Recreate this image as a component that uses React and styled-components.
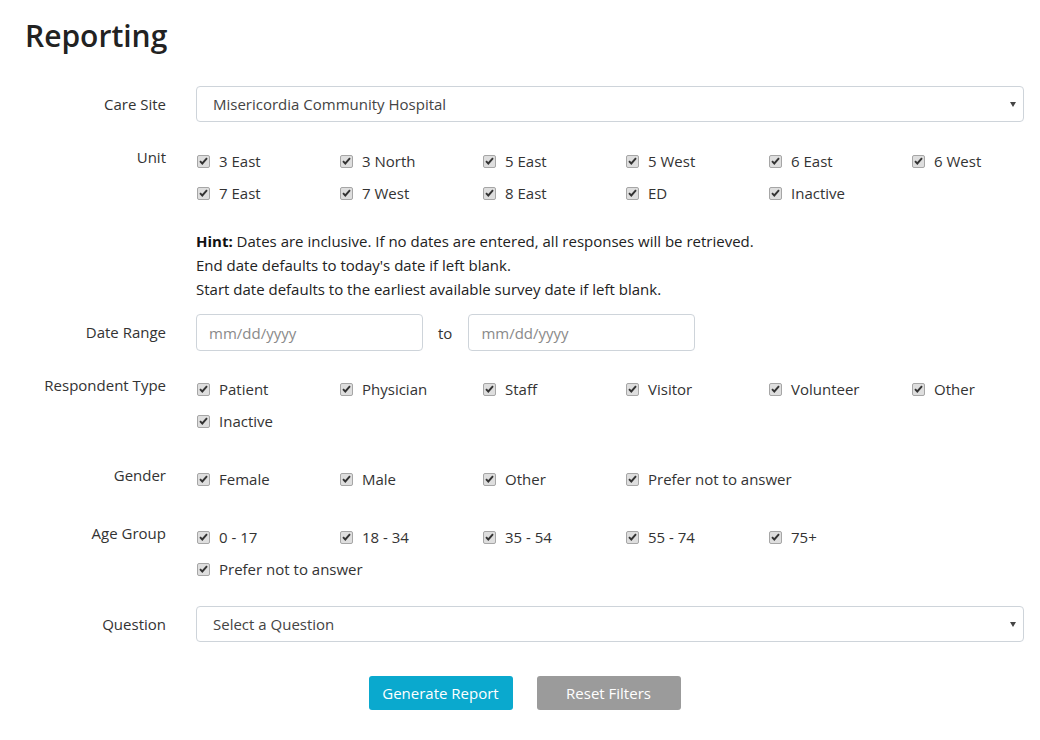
import React from 'react';
import styled, { createGlobalStyle } from 'styled-components';

const GlobalStyle = createGlobalStyle`
    body {
        margin: 0;
        background: #fff;
        font-family: "Open Sans", "Noto Sans", sans-serif;
        color: #333;
    }
`;

const Page = styled.div`
    width: 1040px;
    padding: 14px 16px 30px 25px;
    box-sizing: border-box;
    overflow: hidden;
`, Title = styled.h1`
    margin: 0;
    font-size: 30px;
    line-height: 44px;
    font-weight: 600;
    color: #222;
`, Row = styled.div`
    display: grid;
    grid-template-columns: 141px 1fr;
    column-gap: 30px;
    align-items: ${p => p.$top ? 'start' : 'center'};
    margin-top: ${p => p.$gap}px;
`, Label = styled.div`
    text-align: right;
    font-size: 15px;
    line-height: 24px;
    color: #333;
    margin-top: ${p => p.$top ? 0 : -1}px;
`, Select = styled.div`
    position: relative;
    height: 36px;
    box-sizing: border-box;
    border: 1px solid #ced4da;
    border-radius: 4px;
    padding: 0 16px;
    display: flex;
    align-items: center;
    font-size: 15px;
    color: #444;
    &:after {
        content: '';
        position: absolute;
        right: 7px;
        top: 15px;
        border-left: 3.5px solid transparent;
        border-right: 3.5px solid transparent;
        border-top: 5px solid #444;
    }
`, CheckGrid = styled.div`
    display: flex;
    flex-wrap: wrap;
    margin-right: -30px;
`, CheckItem = styled.label`
    display: flex;
    align-items: center;
    min-width: 143px;
    height: 32px;
    font-size: 15px;
    color: #333;
    white-space: nowrap;
`, Box = styled.span`
    width: 11px;
    height: 11px;
    margin: 0 9px 0 1px;
    border: 1px solid #a6a6a6;
    border-radius: 2px;
    background: #dedede;
    display: flex;
    align-items: center;
    justify-content: center;
    flex-shrink: 0;
`, Hint = styled.div`
    font-size: 15px;
    line-height: 24px;
    color: #222;
    b { font-weight: 700; color: #111; }
`, DateLine = styled.div`
    display: flex;
    align-items: center;
`, DateInput = styled.div`
    width: 227px;
    height: 37px;
    box-sizing: border-box;
    border: 1px solid #ced4da;
    border-radius: 4px;
    padding: 0 12px;
    display: flex;
    align-items: center;
    font-size: 15px;
    color: #8a8a8a;
`, To = styled.span`
    font-size: 15px;
    color: #333;
    margin: 0 16px 0 15px;
`, Buttons = styled.div`
    display: flex;
    justify-content: center;
    gap: 24px;
    margin-top: 34px;
`, Button = styled.button`
    width: 144px;
    height: 34px;
    border: none;
    border-radius: 3px;
    background: ${p => p.$grey ? '#9b9b9b' : '#0aa9ce'};
    color: #fff;
    font-family: inherit;
    font-size: 15px;
    cursor: pointer;
`;

const Check = ({ children }) => (
    <CheckItem>
        <Box>
            <svg width="9" height="8" viewBox="0 0 9 8">
                <path d="M1 4.2 L3.3 6.5 L8 1.2" stroke="#333" strokeWidth="1.9" fill="none"/>
            </svg>
        </Box>
        {children}
    </CheckItem>
);

const units = ['3 East', '3 North', '5 East', '5 West', '6 East', '6 West', '7 East', '7 West', '8 East', 'ED', 'Inactive'];
const respondents = ['Patient', 'Physician', 'Staff', 'Visitor', 'Volunteer', 'Other', 'Inactive'];
const genders = ['Female', 'Male', 'Other', 'Prefer not to answer'];
const ages = ['0 - 17', '18 - 34', '35 - 54', '55 - 74', '75+', 'Prefer not to answer'];

export default function App() {
    return (
        <Page>
            <GlobalStyle/>
            <Title>Reporting</Title>
            <Row $gap={28}>
                <Label>Care Site</Label>
                <Select>Misericordia Community Hospital</Select>
            </Row>
            <Row $gap={23} $top>
                <Label $top>Unit</Label>
                <CheckGrid>{units.map(u => <Check key={u}>{u}</Check>)}</CheckGrid>
            </Row>
            <Row $gap={20}>
                <div/>
                <Hint>
                    <b>Hint:</b> Dates are inclusive. If no dates are entered, all responses will be retrieved.<br/>
                    End date defaults to today's date if left blank.<br/>
                    Start date defaults to the earliest available survey date if left blank.
                </Hint>
            </Row>
            <Row $gap={13}>
                <Label>Date Range</Label>
                <DateLine>
                    <DateInput>mm/dd/yyyy</DateInput>
                    <To>to</To>
                    <DateInput>mm/dd/yyyy</DateInput>
                </DateLine>
            </Row>
            <Row $gap={22} $top>
                <Label $top>Respondent Type</Label>
                <CheckGrid>{respondents.map((r, i) => <Check key={i}>{r}</Check>)}</CheckGrid>
            </Row>
            <Row $gap={26} $top>
                <Label $top>Gender</Label>
                <CheckGrid>{genders.map(g => <Check key={g}>{g}</Check>)}</CheckGrid>
            </Row>
            <Row $gap={26} $top>
                <Label $top>Age Group</Label>
                <CheckGrid>{ages.map(a => <Check key={a}>{a}</Check>)}</CheckGrid>
            </Row>
            <Row $gap={21}>
                <Label>Question</Label>
                <Select>Select a Question</Select>
            </Row>
            <Buttons>
                <Button>Generate Report</Button>
                <Button $grey>Reset Filters</Button>
            </Buttons>
        </Page>
    );
}
